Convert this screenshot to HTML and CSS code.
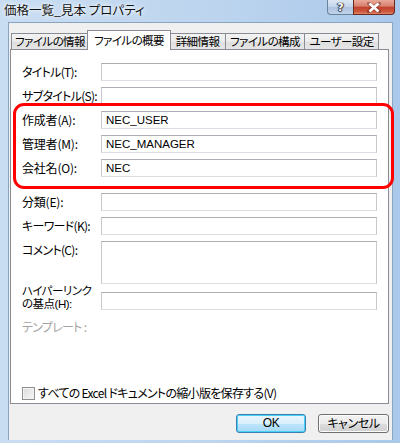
FILE: index.html
```html
<!DOCTYPE html>
<html lang="ja">
<head>
<meta charset="utf-8">
<link rel="stylesheet" href="styles.css">
</head>
<body>
<div class="window">
  <div class="titlebar">
    <span class="title">価格一覧_見本 プロパティ</span>
    <div class="caption">
      <div class="cbtn help">?</div>
      <div class="cbtn close">
        <svg width="14" height="11" viewBox="0 0 14 11"><path d="M2 1.5 L12 9.5 M12 1.5 L2 9.5" stroke="#3a1010" stroke-width="4" stroke-linecap="square" opacity="0.35"/><path d="M2.5 1.5 L11.5 9.5 M11.5 1.5 L2.5 9.5" stroke="#fff" stroke-width="2.6"/></svg>
      </div>
    </div>
  </div>
  <div class="client">
    <div class="tabs">
      <div class="tab t1">ファイルの情報</div>
      <div class="tab t2 active">ファイルの概要</div>
      <div class="tab t3">詳細情報</div>
      <div class="tab t4">ファイルの構成</div>
      <div class="tab t5">ユーザー設定</div>
    </div>
    <div class="panel">
      <div class="form">
        <div class="lbl kana">タイトル(T):</div><div class="inp"></div>
        <div class="lbl kana">サブタイトル(S):</div><div class="inp"></div>
        <div class="lbl">作成者(A):</div><div class="inp">NEC_USER</div>
        <div class="lbl">管理者(M):</div><div class="inp">NEC_MANAGER</div>
        <div class="lbl">会社名(O):</div><div class="inp">NEC</div>
        <div class="lbl sp">分類(E):</div><div class="inp sp"></div>
        <div class="lbl kana">キーワード(K):</div><div class="inp"></div>
        <div class="lbl kana">コメント(C):</div><div class="inp tall"></div>
        <div class="lbl two kana sp2"><span class="line">ハイパーリンク</span><span class="line">の基点(H):</span></div><div class="inp sp2"></div>
        <div class="lbl kana dim">テンプレート :</div><div></div>
      </div>
      <div class="check"><span class="box"></span><span class="checktext">すべての Excel ドキュメントの縮小版を保存する(V)</span></div>
      <div class="highlight"></div>
    </div>
    <div class="buttons">
      <div class="btn ok">OK</div>
      <div class="btn">キャンセル</div>
    </div>
  </div>
</div>
</body>
</html>
```
FILE: styles.css
```css
html, body {
  margin: 0;
  padding: 0;
}
body {
  width: 400px;
  height: 443px;
  overflow: hidden;
  font-family: "Noto Sans CJK JP", "Noto Sans", sans-serif;
  font-size: 12px;
  font-feature-settings: "palt";
  color: #000;
}
.window {
  width: 400px;
  height: 443px;
  box-sizing: border-box;
  padding: 0 7px 3px 8px;
  background: linear-gradient(90deg, #c9ddf2 0%, #bcd4ee 55%, #a9c8ea 100%);
  display: flex;
  flex-direction: column;
}
.titlebar {
  height: 22px;
  display: flex;
  align-items: flex-start;
  justify-content: space-between;
  margin-left: -4px;
}
.title {
  padding-top: 3px;
  font-size: 12.5px;
  line-height: 14px;
  color: #111;
  text-shadow: 0 0 6px #fff, 0 0 3px #fff;
}
.caption {
  display: flex;
  margin-right: -2px;
}
.cbtn {
  height: 15px;
  box-sizing: border-box;
  display: flex;
  align-items: center;
  justify-content: center;
}
.help {
  width: 26px;
  border: 1px solid #6d829b;
  border-top: none;
  border-right: none;
  border-radius: 0 0 0 4px;
  background: linear-gradient(#dbe7f4, #c3d5ea 50%, #adc3de 51%, #bfd3ea);
  color: #fff;
  font-family: "DejaVu Sans", sans-serif;
  font-weight: bold;
  font-size: 11px;
  text-shadow: 0 0 1px #223, 1px 0 1px #334, -1px 0 1px #334, 0 1px 1px #334;
}
.close {
  width: 42px;
  border: 1px solid #6a2a20;
  border-top: none;
  border-radius: 0 0 4px 0;
  background: linear-gradient(#e9a99a, #d77f6c 45%, #c0402c 50%, #cf5a3f 85%, #e08a6a);
}
.client {
  flex: 1;
  background: #f0f0f0;
  border: 1px solid #8aa3bf;
  border-bottom: none;
  padding: 7px 3px 0 1px;
  display: flex;
  flex-direction: column;
}
.tabs {
  display: flex;
  align-items: flex-end;
  padding-left: 1px;
  height: 19px;
  position: relative;
  z-index: 2;
}
.tab {
  height: 16px;
  box-sizing: border-box;
  border: 1px solid #898c95;
  border-bottom: none;
  background: linear-gradient(#f3f3f3, #ebebeb 50%, #dedede 51%, #e6e6e6);
  font-size: 11.5px;
  letter-spacing: -0.6px;
  line-height: 15px;
  text-align: center;
  white-space: nowrap;
  overflow: hidden;
  margin-right: -1px;
}
.tab.active {
  height: 20px;
  background: #fff;
  margin-bottom: -1px;
  line-height: 18px;
  margin-left: -1px;
  margin-right: -2px;
  position: relative;
  z-index: 3;
}
.t1 { width: 78px; }
.t2 { width: 84px; }
.t3 { width: 57px; }
.t4 { width: 80px; }
.t5 { width: 75px; }
.panel {
  height: 355px;
  box-sizing: border-box;
  background: #fff;
  border: 1px solid #898c95;
  padding: 13px 11px 0 11px;
  position: relative;
  display: flex;
  flex-direction: column;
}
.form {
  display: grid;
  grid-template-columns: 79px 1fr;
  row-gap: 6px;
  align-items: start;
}
.lbl {
  font-size: 12px;
  line-height: 14px;
  padding-top: 2px;
  white-space: nowrap;
  letter-spacing: -0.2px;
}
.lbl.kana {
  letter-spacing: -0.7px;
}
.lbl.two {
  padding-top: 0;
  margin-top: -5px;
  display: flex;
  flex-direction: column;
  font-family: "Liberation Sans", "Noto Sans CJK JP", sans-serif;
  font-size: 11.5px;
  letter-spacing: -0.5px;
}
.lbl.two .line {
  display: block;
  height: 13px;
  line-height: 13px;
}
.lbl.dim {
  color: #a3a3a3;
  margin-top: 1px;
}
.sp { margin-top: 10px; }
.sp2 { margin-top: 2px; }
.inp {
  height: 18px;
  box-sizing: border-box;
  border: 1px solid;
  border-color: #abadb3 #c7c9cf #dcdee3 #c7c9cf;
  font-family: "Liberation Sans", Arial, sans-serif;
  font-size: 11.5px;
  line-height: 16px;
  padding-left: 4px;
  color: #000;
}
.inp.tall { height: 43px; }
.check {
  margin-top: 52px;
  display: flex;
  align-items: center;
  font-size: 12px;
  line-height: 14px;
}
.checktext {
  letter-spacing: -0.7px;
}
.box {
  width: 11px;
  height: 11px;
  border: 1px solid #8e8f8f;
  background: linear-gradient(135deg, #dcdcdc, #f6f6f6);
  margin-right: 3px;
  box-shadow: inset 0 0 0 1px #f4f4f4;
}
.highlight {
  position: absolute;
  left: 2px;
  top: 53px;
  width: 375px;
  height: 80px;
  border: 3px solid #ff0000;
  border-radius: 11px;
  pointer-events: none;
}
.buttons {
  display: flex;
  justify-content: flex-end;
  gap: 12px;
  margin-top: 10px;
  padding-right: 0;
}
.btn {
  width: 71px;
  height: 19px;
  box-sizing: border-box;
  border: 1px solid #707070;
  border-radius: 3px;
  background: linear-gradient(#f2f2f2, #ebebeb 50%, #dddddd 51%, #cfcfcf);
  box-shadow: inset 0 0 0 1px #fcfcfc;
  text-align: center;
  font-size: 12px;
  line-height: 16px;
  letter-spacing: -0.4px;
}
.btn.ok {
  width: 70px;
  border-color: #3c7fb1;
  background: linear-gradient(#eaf6fd, #d9f0fc 50%, #bee6fd 51%, #a7d9f5);
  box-shadow: inset 0 0 0 1px #48d0f6;
  font-family: "Liberation Sans", sans-serif;
}
```
